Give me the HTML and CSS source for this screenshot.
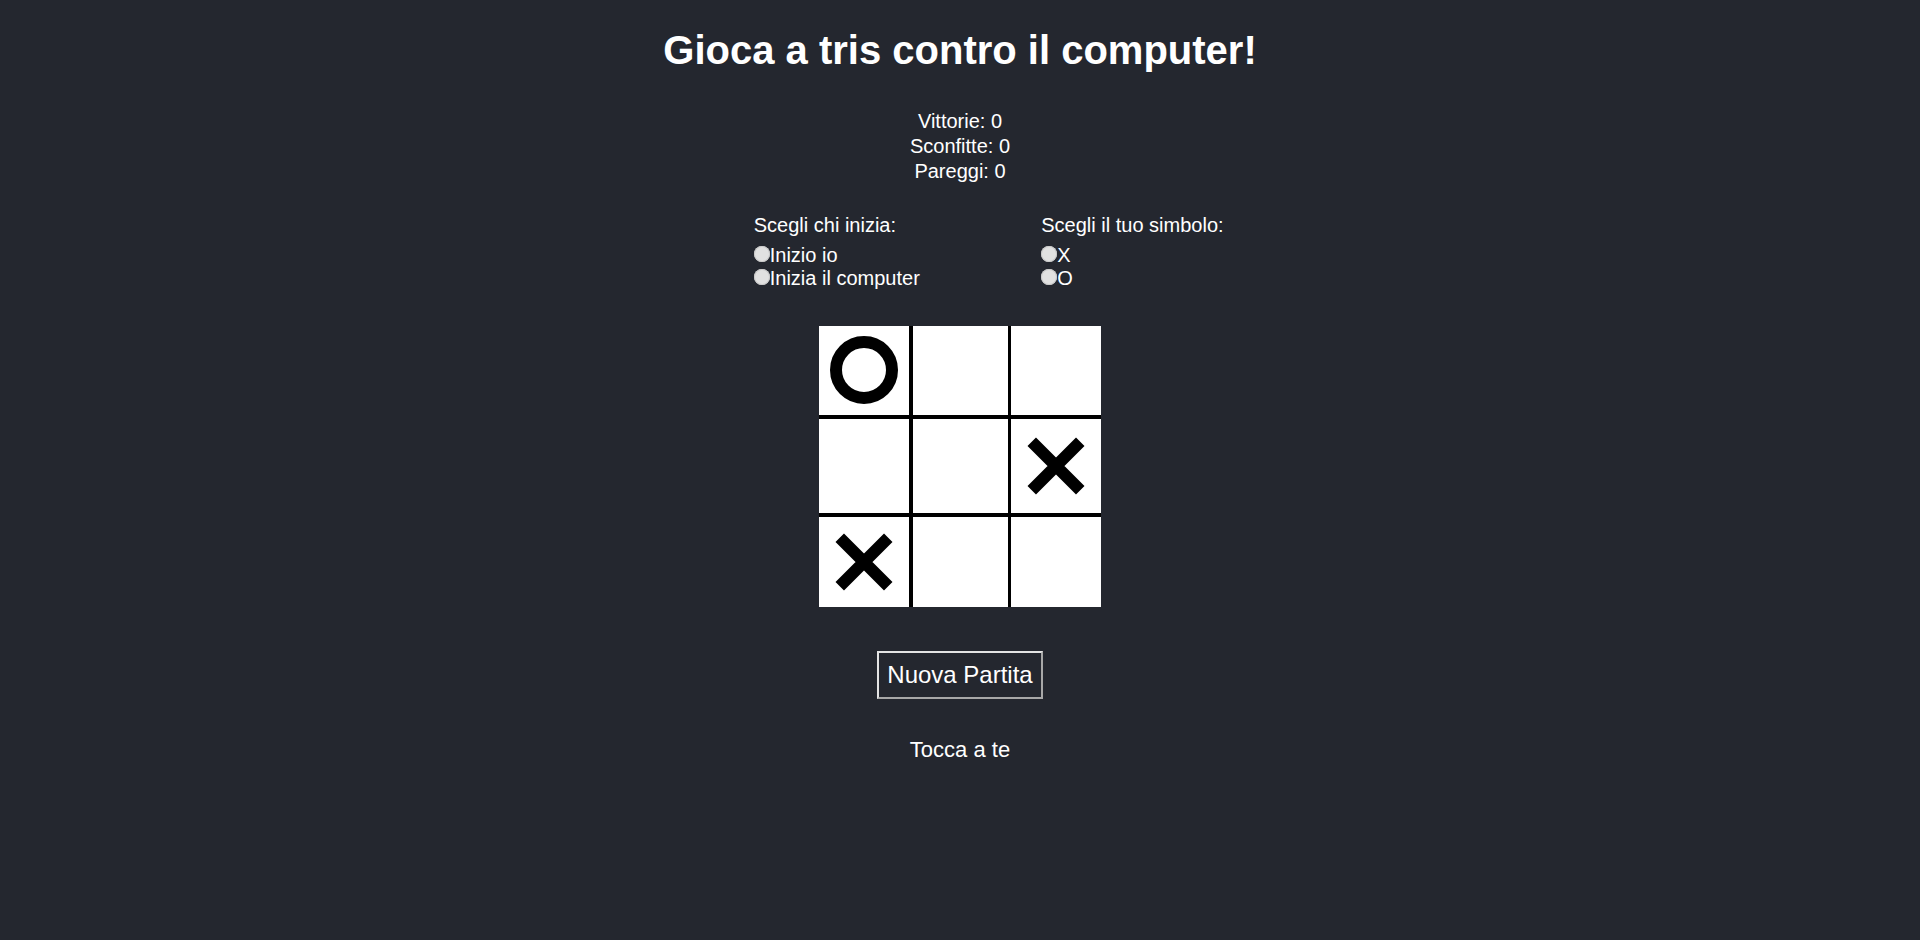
FILE: index.html
```html
<!DOCTYPE html>
<html lang="it">
<head>
<meta charset="utf-8">
<title>Tris</title>
<link rel="stylesheet" href="styles.css">
</head>
<body>
<div class="app">
  <h1 class="title">Gioca a tris contro il computer!</h1>
  <div class="stats">
    <div>Vittorie: 0</div>
    <div>Sconfitte: 0</div>
    <div>Pareggi: 0</div>
  </div>
  <div class="options">
    <div class="opt-col">
      <div class="opt-title">Scegli chi inizia:</div>
      <label class="opt-row"><input class="radio" type="radio" name="start">Inizio io</label>
      <label class="opt-row"><input class="radio" type="radio" name="start">Inizia il computer</label>
    </div>
    <div class="opt-col">
      <div class="opt-title">Scegli il tuo simbolo:</div>
      <label class="opt-row"><input class="radio" type="radio" name="symbol">X</label>
      <label class="opt-row"><input class="radio" type="radio" name="symbol">O</label>
    </div>
  </div>
  <div class="board">
    <div class="cell"><svg class="mark-o" width="70" height="70" viewBox="0 0 70 70"><circle cx="35" cy="35" r="28" fill="none" stroke="#000" stroke-width="12"/></svg></div>
    <div class="cell"></div>
    <div class="cell"></div>
    <div class="cell"></div>
    <div class="cell"></div>
    <div class="cell"><svg class="mark-x" width="60" height="60" viewBox="0 0 60 60"><path d="M5.75 5.75 L54.25 54.25 M54.25 5.75 L5.75 54.25" stroke="#000" stroke-width="12" fill="none"/></svg></div>
    <div class="cell"><svg class="mark-x" width="60" height="60" viewBox="0 0 60 60"><path d="M5.75 5.75 L54.25 54.25 M54.25 5.75 L5.75 54.25" stroke="#000" stroke-width="12" fill="none"/></svg></div>
    <div class="cell"></div>
    <div class="cell"></div>
  </div>
  <button class="new-game" type="button">Nuova Partita</button>
  <div class="status">Tocca a te</div>
</div>
</body>
</html>
```
FILE: styles.css
```css
html, body {
  margin: 0;
  padding: 0;
}
body {
  background: #24272f;
  color: #ffffff;
  font-family: "Liberation Sans", Arial, sans-serif;
}
.app {
  text-align: center;
  padding-top: 26.8px;
}
.title {
  font-size: 40px;
  line-height: 46px;
  font-weight: bold;
  margin: 0 0 36px;
}
.stats {
  font-size: 20px;
  line-height: 25.3px;
}
.options {
  margin-top: 29.6px;
  display: grid;
  grid-template-columns: 250px 125px;
  column-gap: 37.5px;
  justify-content: center;
  text-align: left;
}
.opt-col {
  display: flex;
  flex-direction: column;
  white-space: nowrap;
}
.opt-title {
  font-size: 20px;
  line-height: 23px;
  margin-bottom: 6.4px;
}
.opt-row {
  font-size: 20px;
  line-height: 23px;
  display: block;
}
.radio {
  -webkit-appearance: none;
  appearance: none;
  width: 16px;
  height: 16px;
  margin: 0;
  border-radius: 50%;
  background: #e1e1e1;
  box-shadow: inset 0 0 0 1px #c9c9c9;
  vertical-align: baseline;
  display: inline-block;
}
.board {
  margin: 36.1px auto 0;
  width: 282px;
  display: grid;
  grid-template-columns: 90px 95px 90px;
  grid-template-rows: 89.5px 94px 89.5px;
  column-gap: 3.5px;
  row-gap: 4px;
  background: #000;
}
.cell {
  background: #fff;
  display: flex;
  align-items: center;
  justify-content: center;
}
.mark-o {
  margin-bottom: 2px;
}
.new-game {
  display: block;
  margin: 44px auto 0;
  font-family: "Liberation Sans", Arial, sans-serif;
  font-size: 24px;
  line-height: 28px;
  padding: 8px;
  border: 2px solid;
  border-color: #e4e4e4 #a8a8a8 #a8a8a8 #e4e4e4;
  background: transparent;
  color: #fff;
}
.status {
  margin-top: 38.8px;
  font-size: 22px;
  line-height: 24px;
}
```
